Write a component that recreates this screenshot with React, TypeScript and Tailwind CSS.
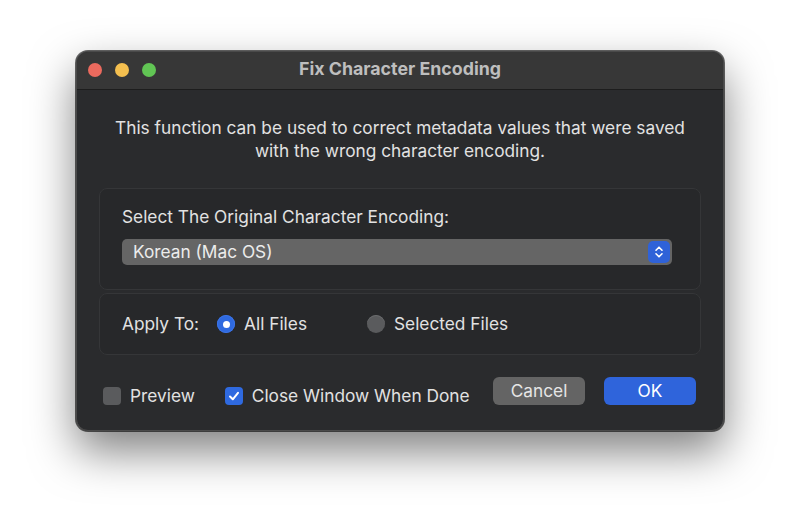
const Radio = ({ on }: { on: boolean }) =>
    on ? (
        <span className="w-[18px] h-[18px] rounded-full bg-[#2f6ae0] flex items-center justify-center shadow-[inset_0_0_0_1px_#3c74e6]">
            <span className="w-[7px] h-[7px] rounded-full bg-white" />
        </span>
    ) : (
        <span className="w-[18px] h-[18px] rounded-full bg-[#5a5b5d] shadow-[inset_0_1px_0_#6a6b6d]" />
    );

const App = () => {
    return (
        <div className="w-[800px] h-[532px] bg-white flex justify-center pt-[51px] font-['Inter','Liberation_Sans',sans-serif]">
            <div className="w-[648px] h-[380px] rounded-[12px] bg-[#2a2b2d] border border-[#4a4a4a] shadow-[0_20px_45px_rgba(0,0,0,0.5),0_0_0_1px_rgba(0,0,0,0.6)] overflow-hidden flex flex-col">
                <div className="h-[38px] shrink-0 bg-[#373737] border-b border-[#1d1d1d] relative flex items-center justify-center">
                    <div className="absolute left-[11px] top-[11px] flex gap-[13px]">
                        <span className="w-[14px] h-[14px] rounded-full bg-[#ec6a5e]" />
                        <span className="w-[14px] h-[14px] rounded-full bg-[#f4bf4f]" />
                        <span className="w-[14px] h-[14px] rounded-full bg-[#61c554]" />
                    </div>
                    <span className="text-[17.8px] font-bold text-[#bebebe] -mt-[2px]">Fix Character Encoding</span>
                </div>

                <div className="px-[22px] flex flex-col">
                    <p className="mt-[26px] text-center text-[17.3px] leading-[23px] text-[#e2e2e2]">
                        This function can be used to correct metadata values that were saved
                        <br />
                        with the wrong character encoding.
                    </p>

                    <div className="mt-[26px] h-[102px] rounded-[8px] bg-[#27282a] border border-[#353638] px-[22px] pt-[17px]">
                        <div className="text-[17.3px] text-[#e2e2e2] leading-[22px]">Select The Original Character Encoding:</div>
                        <div className="mt-[11px] w-[550px] h-[26px] rounded-[5px] bg-[#656565] flex items-center justify-between pl-[11px] pr-[2px]">
                            <span className="text-[17.3px] text-[#ececec]">Korean (Mac OS)</span>
                            <span className="w-[22px] h-[22px] rounded-[5px] bg-[#2f62d8] flex items-center justify-center">
                                <svg width="10" height="14" viewBox="0 0 10 14" fill="none" stroke="white" strokeWidth="1.6" strokeLinecap="round" strokeLinejoin="round">
                                    <path d="M2 5.2 5 2.2 8 5.2" />
                                    <path d="M2 8.8 5 11.8 8 8.8" />
                                </svg>
                            </span>
                        </div>
                    </div>

                    <div className="mt-[3px] h-[62px] rounded-[8px] bg-[#27282a] border border-[#353638] px-[22px] flex items-center text-[17.3px] text-[#e2e2e2]">
                        <span>Apply To:</span>
                        <span className="ml-[18px] flex items-center gap-[9px]">
                            <Radio on />
                            <span>All Files</span>
                        </span>
                        <span className="ml-[60px] flex items-center gap-[9px]">
                            <Radio on={false} />
                            <span>Selected Files</span>
                        </span>
                    </div>
                </div>

                <div className="mt-[22px] pl-[26px] pr-[27px] flex items-start text-[17.3px] text-[#e2e2e2]">
                    <span className="mt-[6px] flex items-center gap-[9px]">
                        <span className="w-[18px] h-[18px] rounded-[4px] bg-[#5a5b5d]" />
                        <span>Preview</span>
                    </span>
                    <span className="mt-[6px] ml-[30px] flex items-center gap-[9px]">
                        <span className="w-[18px] h-[18px] rounded-[4px] bg-[#2f6ae0] flex items-center justify-center">
                            <svg width="12" height="12" viewBox="0 0 12 12" fill="none" stroke="white" strokeWidth="2" strokeLinecap="round" strokeLinejoin="round">
                                <path d="M2 6.5 4.8 9.3 10 2.8" />
                            </svg>
                        </span>
                        <span>Close Window When Done</span>
                    </span>
                    <div className="ml-auto flex gap-[19px]">
                        <button className="w-[92px] h-[28px] rounded-[6px] bg-[#646464] text-[#e6e6e6] text-[17.3px] leading-none">Cancel</button>
                        <button className="w-[92px] h-[28px] rounded-[6px] bg-[#2f64db] text-white text-[17.3px] leading-none">OK</button>
                    </div>
                </div>
            </div>
        </div>
    );
};

export default App;
